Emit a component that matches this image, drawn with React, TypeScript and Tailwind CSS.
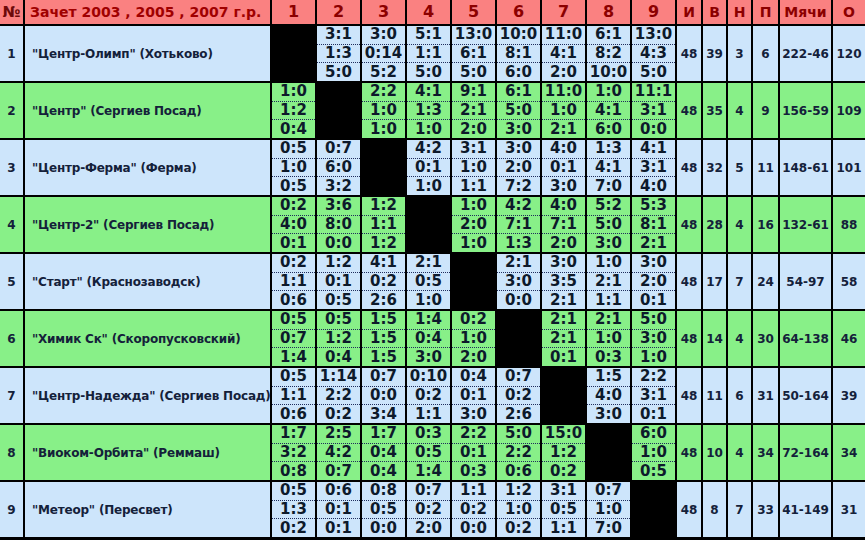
import React from 'react';

type Team = {
  name: string;
  scores: (string | null)[];
  stats: string[];
};

const teams: Team[] = [
  {
    name: '"Центр-Олимп" (Хотьково)',
    scores: [null, '3:1 1:3 5:0', '3:0 0:14 5:2', '5:1 1:1 5:0', '13:0 6:1 5:0', '10:0 8:1 6:0', '11:0 4:1 2:0', '6:1 8:2 10:0', '13:0 4:3 5:0'],
    stats: ['48', '39', '3', '6', '222-46', '120'],
  },
  {
    name: '"Центр" (Сергиев Посад)',
    scores: ['1:0 1:2 0:4', null, '2:2 1:0 1:0', '4:1 1:3 1:0', '9:1 2:1 2:0', '6:1 5:0 3:0', '11:0 1:0 2:1', '1:0 4:1 6:0', '11:1 3:1 0:0'],
    stats: ['48', '35', '4', '9', '156-59', '109'],
  },
  {
    name: '"Центр-Ферма" (Ферма)',
    scores: ['0:5 1:0 0:5', '0:7 6:0 3:2', null, '4:2 0:1 1:0', '3:1 1:0 1:1', '3:0 2:0 7:2', '4:0 0:1 3:0', '1:3 4:1 7:0', '4:1 3:1 4:0'],
    stats: ['48', '32', '5', '11', '148-61', '101'],
  },
  {
    name: '"Центр-2" (Сергиев Посад)',
    scores: ['0:2 4:0 0:1', '3:6 8:0 0:0', '1:2 1:1 1:2', null, '1:0 2:0 1:0', '4:2 7:1 1:3', '4:0 7:1 2:0', '5:2 5:0 3:0', '5:3 8:1 2:1'],
    stats: ['48', '28', '4', '16', '132-61', '88'],
  },
  {
    name: '"Старт" (Краснозаводск)',
    scores: ['0:2 1:1 0:6', '1:2 0:1 0:5', '4:1 0:2 2:6', '2:1 0:5 1:0', null, '2:1 3:0 0:0', '3:0 3:5 2:1', '1:0 2:1 1:1', '3:0 2:0 0:1'],
    stats: ['48', '17', '7', '24', '54-97', '58'],
  },
  {
    name: '"Химик Ск" (Скоропусковский)',
    scores: ['0:5 0:7 1:4', '0:5 1:2 0:4', '1:5 1:5 1:5', '1:4 0:4 3:0', '0:2 1:0 2:0', null, '2:1 2:1 0:1', '2:1 1:0 0:3', '5:0 3:0 1:0'],
    stats: ['48', '14', '4', '30', '64-138', '46'],
  },
  {
    name: '"Центр-Надежда" (Сергиев Посад)',
    scores: ['0:5 1:1 0:6', '1:14 2:2 0:2', '0:7 0:0 3:4', '0:10 0:2 1:1', '0:4 0:1 3:0', '0:7 0:2 2:6', null, '1:5 4:0 3:0', '2:2 3:1 0:1'],
    stats: ['48', '11', '6', '31', '50-164', '39'],
  },
  {
    name: '"Виоком-Орбита" (Реммаш)',
    scores: ['1:7 3:2 0:8', '2:5 4:2 0:7', '1:7 0:4 0:4', '0:3 0:5 1:4', '2:2 0:1 0:3', '5:0 2:2 0:6', '15:0 1:2 0:2', null, '6:0 1:0 0:5'],
    stats: ['48', '10', '4', '34', '72-164', '34'],
  },
  {
    name: '"Метеор" (Пересвет)',
    scores: ['0:5 1:3 0:2', '0:6 0:1 0:1', '0:8 0:5 0:0', '0:7 0:2 2:0', '1:1 0:2 0:0', '1:2 1:0 0:2', '3:1 0:5 1:1', '0:7 1:0 7:0', null],
    stats: ['48', '8', '7', '33', '41-149', '31'],
  },
];

const headers = ['1', '2', '3', '4', '5', '6', '7', '8', '9'];
const statHeaders = ['И', 'В', 'Н', 'П', 'Мячи', 'О'];

const ScoreCell: React.FC<{ value: string | null; bg: string }> = ({ value, bg }) => {
  if (!value) return <div className="bg-black" />;
  const lines = value.split(' ');
  return (
    <div className={`${bg} flex flex-col text-[15px] leading-none text-[#0d1a2b]`}>
      {lines.map((line, i) => (
        <div
          key={i}
          className={`flex-1 flex items-center justify-center ${
            i < 2 ? 'border-b border-dotted border-[#1f2d5c]' : ''
          }`}
        >
          {line}
        </div>
      ))}
    </div>
  );
};

export default function App() {
  return (
    <div
      className="w-[865px] h-[540px] bg-black pb-[3px] font-bold"
      style={{ fontFamily: '"DejaVu Sans", Verdana, sans-serif' }}
    >
      <div className="grid grid-cols-[23px_245px_repeat(9,43px)_24px_23px_23px_25px_51px_32px] grid-rows-[24px_repeat(9,55px)] gap-[2px]">
        <div className="bg-[#fa8181] text-[#6e0a0a] text-[15px] flex items-center justify-center">№</div>
        <div className="bg-[#fa8181] text-[#a00000] text-[14px] flex items-center pl-[5px] whitespace-nowrap">
          Зачет 2003 , 2005 , 2007 г.р.
        </div>
        {headers.map((h) => (
          <div key={h} className="bg-[#fa8181] text-[#8b0000] text-[16px] flex items-center justify-center">
            {h}
          </div>
        ))}
        {statHeaders.map((h) => (
          <div key={h} className="bg-[#fa8181] text-[#8b0000] text-[14px] flex items-center justify-center">
            {h}
          </div>
        ))}

        {teams.map((t, r) => {
          const bg = r % 2 === 0 ? 'bg-[#cde5fb]' : 'bg-[#88f088]';
          return (
            <React.Fragment key={r}>
              <div className={`${bg} text-[12px] text-[#14213a] flex items-center justify-center`}>{r + 1}</div>
              <div className={`${bg} text-[12px] text-[#14213a] flex items-center pl-[7px] whitespace-nowrap tracking-[-0.2px]`}>
                {t.name}
              </div>
              {t.scores.map((s, c) => (
                <ScoreCell key={c} value={s} bg={bg} />
              ))}
              {t.stats.map((s, c) => (
                <div key={c} className={`${bg} text-[12px] text-[#14213a] flex items-center justify-center`}>
                  {s}
                </div>
              ))}
            </React.Fragment>
          );
        })}
      </div>
    </div>
  );
}
